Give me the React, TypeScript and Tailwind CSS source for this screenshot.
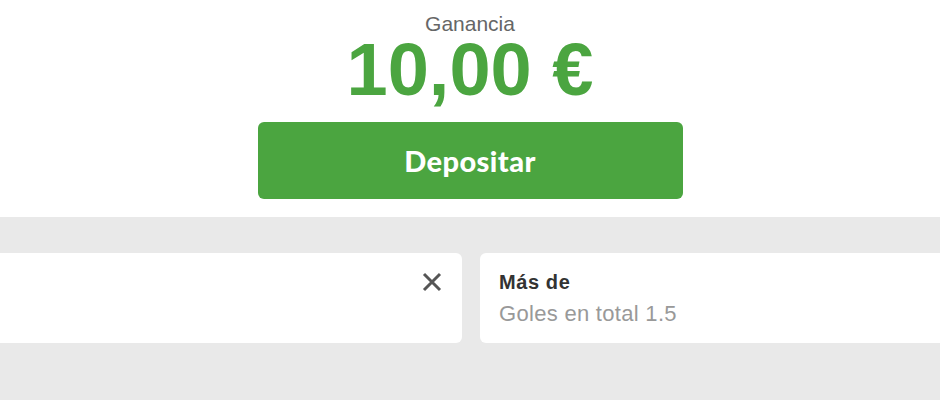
const arial = "font-['Liberation_Sans',Arial,sans-serif]"

const CloseIcon = () => (
  <svg width="20" height="20" viewBox="0 0 20 20" className="text-[#555555]">
    <path d="M2 2L18 18M18 2L2 18" stroke="currentColor" strokeWidth={3} strokeLinecap="butt" />
  </svg>
)

const App = () => {
  return (
    <div className={`w-[940px] h-[400px] overflow-hidden bg-[#e9e9e9] ${arial}`}>
      <section className="bg-white flex flex-col items-center pt-[13px] pb-[18px]">
        <p className="text-[21px] leading-[21px] text-[#666666]">Ganancia</p>
        <p className="mt-[3px] text-[74px] leading-[66px] font-bold text-[#4ba540]">10,00 €</p>
        <button className="mt-[19px] w-[425px] h-[77px] rounded-[6px] bg-[#4ba540] text-white text-[29px] font-black font-['Lato',sans-serif] tracking-[0.4px]">
          Depositar
        </button>
      </section>

      <div className="flex gap-[18px] pt-[36px] -ml-[10px]">
        <div className="w-[472px] h-[90px] shrink-0 rounded-[6px] bg-white flex justify-end items-start pt-[19px] pr-[20px]">
          <CloseIcon />
        </div>
        <div className="w-[472px] h-[90px] shrink-0 rounded-[6px] bg-white pl-[19px] pt-[17px]">
          <p className="text-[20px] leading-[24px] font-bold tracking-[0.6px] text-[#333333]">Más de</p>
          <p className="mt-[6px] text-[22px] leading-[28px] tracking-[0.3px] text-[#999999]">Goles en total 1.5</p>
        </div>
      </div>
    </div>
  )
}

export default App
